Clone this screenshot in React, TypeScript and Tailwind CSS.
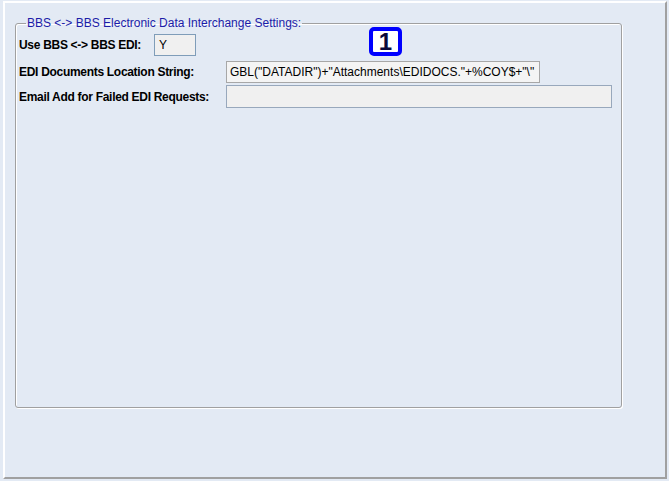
import React from "react";

export default function App() {
  return (
    <div
      className="relative w-[669px] h-[481px] bg-[#e3eaf4] pt-[1px] pl-[3px] pr-[2px] pb-[2px]"
      style={{ fontFamily: '"Liberation Sans", Arial, sans-serif' }}
    >
      <div className="h-full border-2 border-t-white border-l-white border-r-[#a0a0a0] border-b-[#a0a0a0] pl-[10px] pr-[43px] pt-[13px]">
        <fieldset className="h-[392px] border border-[#a0a0a0] rounded-[3px] shadow-[1px_1px_0_#ffffff,inset_1px_1px_0_#ffffff] pl-[3px] pt-[0px]">
          <legend className="ml-[7px] px-[1px] text-[12px] leading-[14px] text-[#1c1ca8]">
            BBS &lt;-&gt; BBS Electronic Data Interchange Settings:
          </legend>
          <div className="flex flex-col pt-[4px]">
            <div className="flex items-center h-[22px]">
              <div className="w-[135px] text-[12px] tracking-[-0.3px] font-bold text-black">Use BBS &lt;-&gt; BBS EDI:</div>
              <div className="w-[42px] h-[22px] border border-[#7f9db9] bg-[#f0f0f0] text-[12px] leading-[20px] pl-[4px] text-black">
                Y
              </div>
            </div>
            <div className="flex items-center h-[22px] mt-[5px]">
              <div className="w-[207px] text-[12px] tracking-[-0.3px] font-bold text-black">EDI Documents Location String:</div>
              <div className="w-[314px] h-[22px] border border-[#a7a7a7] bg-[#f4f4f4] text-[12px] leading-[20px] pl-[3px] text-black whitespace-nowrap overflow-hidden">
                GBL("DATADIR")+"Attachments\EDIDOCS."+%COY$+"\"
              </div>
            </div>
            <div className="flex items-center h-[23px] mt-[2px]">
              <div className="w-[207px] text-[12px] tracking-[-0.3px] font-bold text-black">Email Add for Failed EDI Requests:</div>
              <div className="w-[386px] h-[23px] border border-[#98a8bc] bg-[#f0f0f0]"></div>
            </div>
          </div>
        </fieldset>
      </div>
      <div className="absolute left-[369px] top-[27px] w-[33px] h-[29px] border-[4px] border-[#0000ff] rounded-[5px] bg-white flex items-center justify-center text-[24px] font-bold leading-none text-[#0a0a3a]">
        1
      </div>
    </div>
  );
}
